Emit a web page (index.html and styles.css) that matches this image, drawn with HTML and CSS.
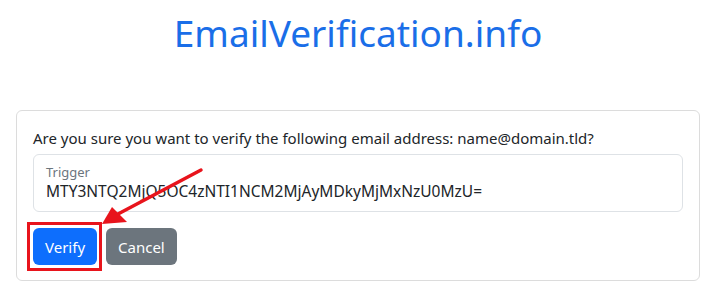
FILE: index.html
```html
<!DOCTYPE html>
<html lang="en">
<head>
    <meta charset="UTF-8">
    <meta name="viewport" content="width=device-width, initial-scale=1.0">
    <title>EmailVerification.info</title>
    <link rel="stylesheet" href="styles.css">
</head>
<body>

    <!-- Titulo -->
    <h1 class="site-title">EmailVerification.info</h1>

    <!-- Cartao de confirmacao -->
    <div class="card">
        <p class="question">Are you sure you want to verify the following email address: name@domain.tld?</p>

        <div class="floating-field">
            <label for="trigger">Trigger</label>
            <input id="trigger" type="text" value="MTY3NTQ2MjQ5OC4zNTI1NCM2MjAyMDkyMjMxNzU0MzU=" readonly>
        </div>

        <div class="actions">
            <button class="btn btn-primary btn-marked">Verify</button>
            <button class="btn btn-secondary">Cancel</button>
        </div>
    </div>

    <!-- Seta de anotacao -->
    <svg class="annotation" width="716" height="298" viewBox="0 0 716 298">
        <line x1="201" y1="170" x2="118" y2="214" stroke="#e8141c" stroke-width="3.5" stroke-linecap="round"/>
        <polygon points="102,224 112,207 127,222" fill="#e8141c"/>
    </svg>

</body>
</html>
```

FILE: styles.css
```css
/* Estilos gerais */
body {
    font-family: "Noto Sans", "Open Sans", sans-serif;
    margin: 0;
    padding: 0 16px;
    color: #212529;
    background-color: #fff;
    position: relative;
}

/* Titulo */
.site-title {
    margin: 0;
    padding-top: 10px;
    height: 102px;
    box-sizing: border-box;
    text-align: center;
    font-weight: 400;
    font-size: 37px;
    line-height: 46px;
    color: #1a6ee8;
}

/* Cartao */
.card {
    border: 1px solid #dcdcdc;
    border-radius: 6px;
    padding: 15px 16px 15px 16px;
    margin-top: 8px;
}

.question {
    margin: 0 0 4px 0;
    font-size: 15px;
    line-height: 24px;
}

/* Campo flutuante */
.floating-field {
    position: relative;
    border: 1px solid #dee2e6;
    border-radius: 6px;
    height: 56px;
    padding: 0 12px;
}

.floating-field label {
    display: block;
    padding-top: 9px;
    font-size: 13px;
    line-height: 16px;
    color: #6c757d;
}

.floating-field input {
    display: block;
    width: 100%;
    border: none;
    outline: none;
    padding: 0;
    font-family: inherit;
    font-size: 15.5px;
    line-height: 22px;
    color: #212529;
    background: transparent;
}

/* Botoes */
.actions {
    display: flex;
    gap: 9px;
    margin-top: 16px;
}

.btn {
    font-family: inherit;
    font-size: 15px;
    line-height: 24px;
    padding: 6px 11px;
    border: 1px solid transparent;
    border-radius: 6px;
    color: #fff;
    cursor: pointer;
    height: 37px;
}

.btn-primary {
    background-color: #0d6efd;
}

.btn-secondary {
    background-color: #6c757d;
}

/* Moldura vermelha de destaque */
.btn-marked {
    position: relative;
}

.btn-marked::after {
    content: "";
    position: absolute;
    left: -7px;
    top: -7px;
    right: -6px;
    bottom: -7px;
    border: 3px solid #e8141c;
}

/* Anotacao */
.annotation {
    position: absolute;
    left: 0;
    top: 0;
    pointer-events: none;
}
```
